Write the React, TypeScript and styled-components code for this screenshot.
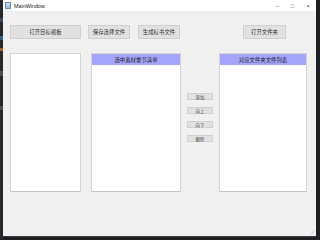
import React from "react";
import styled, { createGlobalStyle } from "styled-components";

const Global = createGlobalStyle`
  html, body { margin: 0; padding: 0; background: #1e1f22; }
  body { width: 320px; height: 240px; overflow: hidden; font-family: "Noto Sans CJK SC", "Liberation Sans", sans-serif; }
`;

const Desktop = styled.div`
  display: flex;
  width: 320px;
  height: 240px;
`;

const DesktopStrip = styled.div`
  width: 3px;
  display: flex;
  flex-direction: column;
  background: #26282c;
`;

const Spot = styled.div<{ $c: string; $h: number; $mt: number }>`
  height: ${(p) => p.$h}px;
  margin-top: ${(p) => p.$mt}px;
  background: ${(p) => p.$c};
`;

const Win = styled.div`
  width: 313px;
  height: 236px;
  display: flex;
  flex-direction: column;
  background: #f0f0f0;
  box-shadow: 0 1px 0 #3a3a3a;
  position: relative;
`;

const TitleBar = styled.div`
  height: 11px;
  background: #ffffff;
  display: flex;
  align-items: center;
  padding-left: 2px;
  font-family: "Liberation Sans", "Noto Sans", sans-serif;
  font-size: 5.4px;
  color: #222;
`;

const AppIcon = styled.div`
  width: 4px;
  height: 5px;
  border: 0.6px solid #6a8aa8;
  background: linear-gradient(#cfe3f3, #9cbad6);
  margin-right: 3px;
`;

const TitleText = styled.span`
  flex: 1;
`;

const Ctl = styled.div<{ $w: number }>`
  width: ${(p) => p.$w}px;
  display: flex;
  justify-content: center;
  align-items: center;
  color: #444;
`;

const Body = styled.div`
  flex: 1;
  display: flex;
  flex-direction: column;
  padding: 14px 0 0 7px;
`;

const TopRow = styled.div`
  display: flex;
  height: 14px;
`;

const Btn = styled.button<{ $w: number; $ml: number }>`
  width: ${(p) => p.$w}px;
  margin-left: ${(p) => p.$ml}px;
  height: 14px;
  padding: 0;
  background: #e1e1e1;
  border: 1px solid #d0d0d0;
  font-family: "Noto Sans CJK SC", sans-serif;
  font-size: 5.4px;
  color: #333;
  display: flex;
  align-items: center;
  justify-content: center;
`;

const MainRow = styled.div`
  display: flex;
  margin-top: 14px;
  height: 139px;
`;

const ListBox = styled.div<{ $w: number; $ml: number }>`
  width: ${(p) => p.$w}px;
  margin-left: ${(p) => p.$ml}px;
  box-sizing: border-box;
  background: #fff;
  border: 1px solid #d4d4d4;
  border-bottom: 1px solid #c4c4c4;
  display: flex;
  flex-direction: column;
`;

const Header = styled.div`
  height: 11px;
  background: #a5a5fb;
  display: flex;
  align-items: center;
  justify-content: center;
  font-size: 5.4px;
  color: #222;
`;

const SideCol = styled.div`
  width: 26px;
  margin-left: 6px;
  display: flex;
  flex-direction: column;
  gap: 7px;
  padding-top: 40px;
`;

const SmallBtn = styled.button`
  height: 7px;
  width: 26px;
  padding: 0;
  background: #e1e1e1;
  border: 1px solid #d0d0d0;
  font-family: "Noto Sans CJK SC", sans-serif;
  font-size: 4.4px;
  color: #444;
  display: flex;
  align-items: center;
  justify-content: center;
`;

const Grip = styled.div`
  position: absolute;
  right: 2px;
  bottom: 2px;
  width: 4px;
  height: 4px;
  background: linear-gradient(135deg, transparent 55%, #c8c8c8 55%, #c8c8c8 70%, transparent 70%);
`;

export default function App() {
  return (
    <>
      <Global />
      <Desktop>
        <DesktopStrip>
          <Spot $c="#3b4a5a" $h={4} $mt={18} />
          <Spot $c="#2f5f8f" $h={4} $mt={14} />
          <Spot $c="#b05a20" $h={3} $mt={8} />
          <Spot $c="#4a4f55" $h={5} $mt={20} />
          <Spot $c="#4a4f55" $h={4} $mt={30} />
        </DesktopStrip>
        <Win>
          <TitleBar>
            <AppIcon />
            <TitleText>MainWindow</TitleText>
            <Ctl $w={15}>–</Ctl>
            <Ctl $w={15}>□</Ctl>
            <Ctl $w={16}>×</Ctl>
          </TitleBar>
          <Body>
            <TopRow>
              <Btn $w={71} $ml={0}>打开目标模板</Btn>
              <Btn $w={42} $ml={7}>保存选择文件</Btn>
              <Btn $w={42} $ml={8}>生成标书文件</Btn>
              <Btn $w={43} $ml={63}>打开文件夹</Btn>
            </TopRow>
            <MainRow>
              <ListBox $w={71} $ml={0} />
              <ListBox $w={90} $ml={10}>
                <Header>选中素材章节清单</Header>
              </ListBox>
              <SideCol>
                <SmallBtn>添加</SmallBtn>
                <SmallBtn>向上</SmallBtn>
                <SmallBtn>向下</SmallBtn>
                <SmallBtn>删除</SmallBtn>
              </SideCol>
              <ListBox $w={88} $ml={6}>
                <Header>对应文件夹文件列表</Header>
              </ListBox>
            </MainRow>
          </Body>
          <Grip />
        </Win>
      </Desktop>
    </>
  );
}
